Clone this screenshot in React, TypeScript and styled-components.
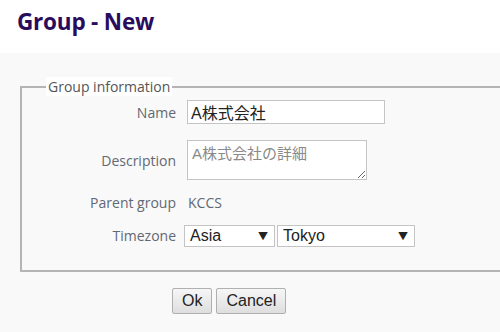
import React from 'react';
import styled, { createGlobalStyle } from 'styled-components';

const Global = createGlobalStyle`
    body {
        margin: 0;
        background: #f9f9f9;
        font-family: "Open Sans", "Noto Sans CJK JP", sans-serif;
    }
`;

const Header = styled.header`
    background: #fff;
    height: 53px;
    padding: 6px 0 0 17px;
    box-sizing: border-box;
`;

const Title = styled.h1`
    margin: 0;
    font-size: 22.5px;
    font-weight: 700;
    color: #2b0c5c;
    letter-spacing: -0.2px;
`;

const Main = styled.main`
    padding-top: 24px;
    overflow: hidden;
`;

const Fieldset = styled.fieldset`
    margin: 0 -20px 0 20px;
    padding: 4px 0 23px 0;
    border: 2px solid #b4b4b4;
    border-right: none;
`;

const Legend = styled.legend`
    margin-left: 24px;
    padding: 0 2px;
    background: #fff;
    font-size: 14px;
    color: #555;
`;

const Row = styled.div<{ $top: number }>`
    display: grid;
    grid-template-columns: 154px auto;
    column-gap: 11px;
    align-items: center;
    margin-top: ${p => p.$top}px;
`;

const Label = styled.label`
    text-align: right;
    font-size: 14px;
    color: #626873;
`;

const Value = styled.span`
    font-size: 14px;
    color: #626873;
    padding-left: 1px;
`;

const TextInput = styled.input`
    width: 198px;
    height: 24px;
    box-sizing: border-box;
    border: 1px solid #c4c4c4;
    background: #fff;
    padding: 0 3px;
    font-size: 16px;
    color: #222;
    font-family: "Liberation Sans", "Noto Sans CJK JP", sans-serif;
`;

const TextArea = styled.textarea`
    width: 180px;
    height: 40px;
    box-sizing: border-box;
    border: 1px solid #c4c4c4;
    background: #fff;
    padding: 1px 4px;
    font-size: 15px;
    font-family: "Liberation Sans", "Noto Sans CJK JP", sans-serif;
    &::placeholder {
        color: #8a8a8a;
    }
`;

const Selects = styled.div`
    display: flex;
    gap: 2px;
    margin-left: -3px;
`;

const SelectWrap = styled.div<{ $w: number }>`
    position: relative;
    width: ${p => p.$w}px;
`;

const Select = styled.select`
    appearance: none;
    width: 100%;
    height: 22px;
    box-sizing: border-box;
    border: 1px solid #c4c4c4;
    background: #fff;
    padding: 0 0 0 5px;
    font-size: 16px;
    color: #222;
    font-family: "Liberation Sans", sans-serif;
`;

const Arrow = styled.span`
    position: absolute;
    right: 7px;
    top: 4px;
    font-size: 10px;
    color: #222;
    pointer-events: none;
`;

const Actions = styled.div`
    display: flex;
    gap: 4px;
    padding: 16px 0 0 172px;
`;

const Button = styled.button`
    height: 26px;
    padding: 0 9px;
    border: 1px solid #b0b0b0;
    border-radius: 2px;
    background: linear-gradient(#f6f6f6, #dedede);
    font-size: 16px;
    color: #222;
    font-family: "Liberation Sans", sans-serif;
`;

export default function App() {
    return (
        <>
            <Global />
            <Header>
                <Title>Group - New</Title>
            </Header>
            <Main>
                <Fieldset>
                    <Legend>Group information</Legend>
                    <Row $top={0}>
                        <Label>Name</Label>
                        <TextInput defaultValue="A株式会社" />
                    </Row>
                    <Row $top={16}>
                        <Label>Description</Label>
                        <TextArea placeholder="A株式会社の詳細" />
                    </Row>
                    <Row $top={13}>
                        <Label>Parent group</Label>
                        <Value>KCCS</Value>
                    </Row>
                    <Row $top={12}>
                        <Label>Timezone</Label>
                        <Selects>
                            <SelectWrap $w={91}>
                                <Select defaultValue="Asia">
                                    <option>Asia</option>
                                </Select>
                                <Arrow>▼</Arrow>
                            </SelectWrap>
                            <SelectWrap $w={138}>
                                <Select defaultValue="Tokyo">
                                    <option>Tokyo</option>
                                </Select>
                                <Arrow>▼</Arrow>
                            </SelectWrap>
                        </Selects>
                    </Row>
                </Fieldset>
                <Actions>
                    <Button>Ok</Button>
                    <Button>Cancel</Button>
                </Actions>
            </Main>
        </>
    );
}
